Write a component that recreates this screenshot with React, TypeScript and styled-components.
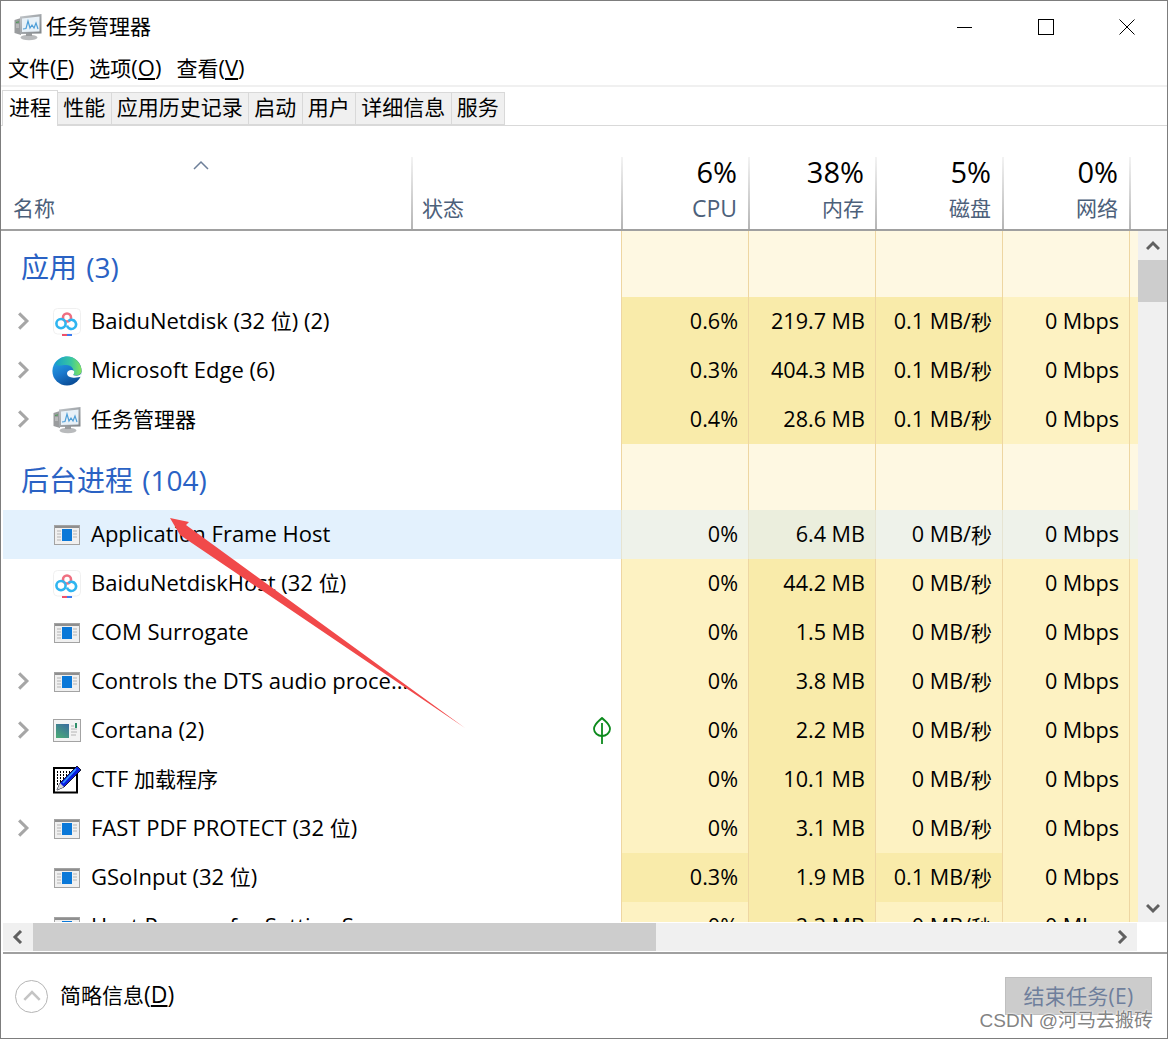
import React from "react";
import styled, { createGlobalStyle } from "styled-components";

const Global = createGlobalStyle`
  html, body { margin: 0; padding: 0; background: #fff; overflow: hidden; }
  * { box-sizing: border-box; }
`;

const FONT = `"Open Sans", "Noto Sans CJK SC", sans-serif`;
const COLS = "408px 210px 127px 127px 127px 127px 8px";

const Win = styled.div`
  position: relative;
  width: 1168px;
  height: 1039px;
  border: 1px solid #7d7d7d;
  display: flex;
  flex-direction: column;
  background: #fff;
  font-family: ${FONT};
  color: #000;
  overflow: hidden;
`;
const TitleBar = styled.div`
  height: 53px;
  flex: none;
  display: flex;
  align-items: center;
  padding: 0 0 2px 13px;
`;
const TitleText = styled.span`
  font-size: 21px;
  margin: 0 0 4px 4px;
  flex: 1;
`;
const WinButton = styled.div`
  width: 81px;
  height: 51px;
  display: flex;
  align-items: center;
  justify-content: center;
`;
const MenuBar = styled.div`
  height: 33px;
  flex: none;
  display: flex;
  gap: 15px;
  padding: 0 0 6px 7px;
  align-items: center;
  border-bottom: 2px solid #f0f0f0;
  font-size: 22px;
`;
const MenuItem = styled.span`
  u { text-underline-offset: 2px; }
`;
const CjkRun = styled.span`
  font-size: 21px;
`;
const TabBar = styled.div`
  height: 39px;
  flex: none;
  display: flex;
  align-items: flex-end;
  padding-left: 1px;
  border-bottom: 1px solid #d9d9d9;
`;
const Tab = styled.div<{ $active?: boolean }>`
  height: ${(p) => (p.$active ? 36 : 33)}px;
  margin-bottom: ${(p) => (p.$active ? -1 : 0)}px;
  padding: 0 ${(p) => (p.$active ? 6 : 5.25)}px 5px;
  display: flex;
  align-items: center;
  font-size: 21px;
  background: ${(p) => (p.$active ? "#fff" : "#f0f0f0")};
  border: 1px solid #d9d9d9;
  border-left: ${(p) => (p.$active ? "1px solid #d9d9d9" : "none")};
  border-bottom: ${(p) => (p.$active ? "none" : "1px solid #d9d9d9")};
  position: relative;
  z-index: ${(p) => (p.$active ? 1 : 0)};
`;
const HeaderGap = styled.div`
  height: 31px;
  flex: none;
`;
const HeaderRow = styled.div`
  height: 74px;
  flex: none;
  padding-left: 1px;
  display: grid;
  grid-template-columns: 409px 210px 127px 127px 127px 127px 8px;
  grid-template-rows: 72px;
  border-bottom: 2px solid #a0a0a0;
`;
const HeadCell = styled.div<{ $sep?: boolean; $metric?: boolean }>`
  position: relative;
  display: flex;
  flex-direction: column;
  justify-content: flex-end;
  align-items: ${(p) => (p.$metric ? "flex-end" : "flex-start")};
  padding: 0 ${(p) => (p.$metric ? 11 : 0)}px 7px ${(p) => (p.$metric ? 0 : p.$sep ? 9 : 11)}px;
  border-left: ${(p) => (p.$sep ? "2px solid transparent" : "none")};
  border-image: ${(p) => (p.$sep ? "linear-gradient(#f4f4f4,#b4b4b4) 1" : "none")};
`;
const Percent = styled.div`
  font-size: 29px;
  line-height: 30px;
  margin-bottom: 7px;
`;
const HeadLabel = styled.div`
  font-size: 21px;
  line-height: 28px;
  color: #4c607a;
`;
const LatinLabel = styled(HeadLabel)`
  font-size: 23px;
`;
const SortCaret = styled.svg`
  position: absolute;
  left: 191px;
  top: 3px;
`;
const Body = styled.div`
  height: 691px;
  flex: none;
  padding-left: 2px;
  display: flex;
`;
const Viewport = styled.div`
  flex: 1;
  overflow: hidden;
`;
const Row = styled.div`
  display: grid;
  grid-template-columns: ${COLS};
  height: 49px;
`;
const SectionRow = styled(Row)`
  height: 66px;
`;
const SectionTitle = styled.div`
  grid-column: 1 / span 2;
  font-size: 28px;
  word-spacing: 2px;
  color: #2a62c4;
  padding: 14px 0 0 18px;
  line-height: 44px;
`;
const NameCell = styled.div<{ $hot?: boolean }>`
  grid-column: 1;
  display: flex;
  align-items: center;
  font-size: 22px;
  white-space: nowrap;
  background: ${(p) => (p.$hot ? "#e3f1fd" : "#fff")};
`;
const NameText = styled.span`
  margin-bottom: 4px;
`;
const StatusCell = styled.div<{ $hot?: boolean }>`
  display: flex;
  align-items: center;
  justify-content: flex-end;
  padding-right: 10px;
  background: ${(p) => (p.$hot ? "#e3f1fd" : "#fff")};
`;
const ChevronSlot = styled.div`
  width: 49px;
  height: 18px;
  flex: none;
  padding-left: 11px;
  margin-bottom: 2px;
  display: flex;
`;
const IconSlot = styled.div`
  width: 30px;
  height: 30px;
  flex: none;
  margin-right: 9px;
  display: flex;
  align-items: center;
  justify-content: center;
`;
const tone: Record<string, string> = {
  section: "#fef8e2",
  low: "#fdf2c2",
  mid: "#f9ebaa",
  hotLow: "#eef2ea",
  hotMid: "#ebeedd",
};
const Metric = styled.div<{ $tone: string }>`
  display: flex;
  align-items: center;
  justify-content: flex-end;
  padding: 0 10px 2px 0;
  font-size: 21.6px;
  white-space: nowrap;
  background: ${(p) => tone[p.$tone]};
  border-left: 1px solid ${(p) => (p.$tone.startsWith("hot") ? "#e6e4d2" : "#eed6a2")};
`;
const VScroll = styled.div`
  width: 29px;
  flex: none;
  background: #f0f0f0;
  display: flex;
  flex-direction: column;
`;
const ScrollBtnV = styled.div<{ $end?: boolean }>`
  height: 29px;
  flex: none;
  display: flex;
  align-items: center;
  justify-content: center;
  margin-top: ${(p) => (p.$end ? "auto" : 0)};
`;
const VThumb = styled.div`
  height: 42px;
  background: #cdcdcd;
`;
const HScroll = styled.div`
  height: 28px;
  flex: none;
  margin: 1px 0 0 2px;
  display: flex;
`;
const HTrack = styled.div`
  width: 1134px;
  background: #f0f0f0;
  display: flex;
`;
const ScrollBtnH = styled.div`
  width: 30px;
  flex: none;
  display: flex;
  align-items: center;
  justify-content: center;
`;
const HThumb = styled.div`
  width: 623px;
  flex: none;
  background: #cdcdcd;
`;
const HSpace = styled.div`
  flex: 1;
`;
const Footer = styled.div`
  margin-top: 1px;
  height: 86px;
  flex: none;
  margin-left: 2px;
  border-top: 2px solid #a0a0a0;
  display: flex;
  align-items: center;
  padding: 0 15px 0 12px;
`;
const Collapse = styled.div`
  width: 33px;
  height: 33px;
  border-radius: 50%;
  border: 1px solid #b5b5b5;
  display: flex;
  align-items: center;
  justify-content: center;
  margin-right: 12px;
`;
const FooterText = styled.span`
  font-size: 23px;
  flex: 1;
  margin-bottom: 4px;
`;
const EndTask = styled.div`
  width: 147px;
  height: 38px;
  padding-bottom: 2px;
  background: #cccccc;
  border: 1px solid #bfbfbf;
  color: #6f7f9c;
  font-size: 21px;
  letter-spacing: 0.3px;
  display: flex;
  align-items: center;
  justify-content: center;
`;
const Watermark = styled.div`
  position: absolute;
  right: 14px;
  bottom: 5px;
  font-family: "Liberation Sans", "Noto Sans CJK SC", sans-serif;
  font-size: 19px;
  line-height: 24px;
  color: rgba(115, 115, 115, 0.9);
  text-shadow: 0 0 2px #fff, 0 0 2px #fff;
`;
const ArrowLayer = styled.svg`
  position: absolute;
  left: -1px;
  top: -1px;
  pointer-events: none;
`;

const Mixed = ({ t }: { t: string }) => (
  <>
    {t.split(/([\u4e00-\u9fff]+)/).map((part, i) =>
      i % 2 ? <CjkRun key={i}>{part}</CjkRun> : part
    )}
  </>
);

const Chevron = ({ dir, color = "#a6a6a6", size = 18, w = 2.4 }: { dir: "r" | "l" | "u" | "d"; color?: string; size?: number; w?: number }) => {
  const pts = { r: "4,1 10,7 4,13", l: "10,1 4,7 10,13", u: "1,10 7,4 13,10", d: "1,4 7,10 13,4" }[dir];
  return (
    <svg width={size} height={size} viewBox="0 0 14 14">
      <polyline points={pts} fill="none" stroke={color} strokeWidth={w} />
    </svg>
  );
};

let gradSeq = 0;
const TaskIcon = () => {
  const id = `tm${gradSeq++}`;
  return (
    <svg width="28" height="28" viewBox="0 0 28 28">
      <defs>
        <linearGradient id={id} x1="0" y1="0" x2="1" y2="1">
          <stop offset="0" stopColor="#c4c8cc" />
          <stop offset="1" stopColor="#7f8488" />
        </linearGradient>
      </defs>
      <path d="M0.5 7 L7 5 L7 22 L0.5 20 Z" fill="#9a9c9e" />
      <path d="M2 9 L5 8.2 V9.4 L2 10 Z" fill="#4f9a58" />
      <path d="M2 12h3M2 14h3" stroke="#d5d5d5" />
      <ellipse cx="15" cy="24.5" rx="8.5" ry="2.8" fill="#b8babc" />
      <rect x="12" y="20" width="6" height="3" fill="#9a9c9e" />
      <path d="M6 3.5 L27.5 1 L27.5 20.5 L6 21 Z" fill={`url(#${id})`} />
      <path d="M8 5.5 L25.5 3.5 L25.5 18.5 L8 19 Z" fill="#e8f1f8" />
      <polyline points="9,16 12,15.5 14,8 16,15 18,12 20,15 22,10 24,16" fill="none" stroke="#4f9fd8" strokeWidth="1.2" />
    </svg>
  );
};
const BaiduIcon = () => (
  <svg width="28" height="28" viewBox="0 0 28 28">
    <rect x="0.5" y="0.5" width="27" height="25.5" rx="4" fill="#fff" stroke="#f0f0f0" />
    <circle cx="14" cy="9.5" r="4" fill="none" stroke="#ef6f80" strokeWidth="2.6" />
    <circle cx="8" cy="15.6" r="4.6" fill="none" stroke="#2fb5f0" strokeWidth="2.6" />
    <path d="M14 17.5 A4.6 4.6 0 1 0 15.4 13" fill="none" stroke="#2fb5f0" strokeWidth="2.6" />
    <rect x="9" y="26" width="5" height="2" fill="#f0506a" />
    <rect x="14" y="26" width="5" height="2" fill="#3d7df0" />
  </svg>
);
const EdgeIcon = () => (
  <svg width="30" height="30" viewBox="0 0 30 30">
    <defs>
      <linearGradient id="eb" x1="0" y1="0" x2="0.5" y2="1">
        <stop offset="0" stopColor="#2ab0ec" />
        <stop offset="0.6" stopColor="#1a78cc" />
        <stop offset="1" stopColor="#0b4f9a" />
      </linearGradient>
      <linearGradient id="eg" x1="0" y1="0.5" x2="1" y2="0.5">
        <stop offset="0" stopColor="#16a0c8" />
        <stop offset="0.6" stopColor="#38c6a0" />
        <stop offset="1" stopColor="#86e45a" />
      </linearGradient>
    </defs>
    <circle cx="15" cy="15" r="14.6" fill="url(#eb)" />
    <path d="M3 7.5 C6.5 2.5 11 0.4 15 0.4 C24 0.4 29.6 8 29.6 15 C29.6 19 24.5 20.5 21 18.5 C23 14 20 9 14 9 C9.5 9 6 11 3 7.5 Z" fill="url(#eg)" />
    <path d="M15 17.5 C15 14 20 13 22 15 C22.5 16.5 22 18 21 19 C24 20.5 28 20 29.8 16.5 L29.4 20.5 C27 21.5 23 22 20 21.5 C17 21 15 20 15 17.5 Z" fill="#fbfdff" />
  </svg>
);
const AppIcon = () => (
  <svg width="26" height="20" viewBox="0 0 26 20">
    <rect x="0.5" y="0.5" width="25" height="19" fill="#f0f0f0" stroke="#a3a3a3" />
    <rect x="1" y="1" width="24" height="2" fill="#8f8f8f" />
    <rect x="8" y="4" width="10" height="12" fill="#0a78d8" />
    <path d="M3 6h4M3 9h4M3 12h4M3 15h4M19 6h4M19 9h4M19 12h4" stroke="#b4b4b4" strokeWidth="1" />
  </svg>
);
const CortanaIcon = () => (
  <svg width="28" height="24" viewBox="0 0 28 24">
    <defs>
      <linearGradient id="cg" x1="0.8" y1="0" x2="0.2" y2="1">
        <stop offset="0" stopColor="#3a6f9c" />
        <stop offset="1" stopColor="#4aa878" />
      </linearGradient>
    </defs>
    <rect x="0.5" y="0.5" width="27" height="22" fill="#f3f3f3" stroke="#a3a3a3" />
    <rect x="3" y="5" width="13" height="14" fill="url(#cg)" />
    <rect x="22" y="4" width="2" height="5" fill="#2f8f6a" />
    <path d="M18 7h3M18 10h6M18 13h6M18 16h5" stroke="#b4b4b4" strokeWidth="1" />
  </svg>
);
const PenIcon = () => (
  <svg width="28" height="28" viewBox="0 0 28 28">
    <rect x="1" y="2" width="23" height="24.5" fill="#fff" stroke="#000" strokeWidth="2" />
    <path d="M4 6h1M7 6h1M10 6h1M13 6h1M16 6h1M4 9h1M7 9h1M10 9h1M13 9h1M4 12h1M7 12h1M10 12h1M4 15h1M7 15h1M4 18h1" stroke="#000" strokeWidth="2" />
    <path d="M24 0 L28 4 L11 21 L4 24 L7 17 Z" fill="#0a1ee0" stroke="#000" strokeWidth="0.8" />
    <path d="M23 3 L10 17" stroke="#3aa0ff" strokeWidth="1.6" />
    <path d="M4 24 L7 17 L11 21 Z" fill="#d8d8d8" />
  </svg>
);
const LeafIcon = () => (
  <svg width="18" height="28" viewBox="0 0 18 28">
    <path d="M9 1 C13 5 17 7 17 12 C17 16 13 19 9 19 C5 19 1 16 1 12 C1 7 5 5 9 1 Z" fill="none" stroke="#0c8a1c" strokeWidth="1.8" />
    <path d="M9 6 V27" stroke="#0c8a1c" strokeWidth="1.8" />
  </svg>
);

type R = {
  icon: React.ReactNode;
  name: string;
  exp?: boolean;
  cpu: string;
  mem: string;
  disk: string;
  cpuHi?: boolean;
  diskHi?: boolean;
  hot?: boolean;
  leaf?: boolean;
};

const apps: R[] = [
  { icon: <BaiduIcon />, name: "BaiduNetdisk (32 位) (2)", exp: true, cpu: "0.6%", mem: "219.7 MB", disk: "0.1 MB/秒", cpuHi: true, diskHi: true },
  { icon: <EdgeIcon />, name: "Microsoft Edge (6)", exp: true, cpu: "0.3%", mem: "404.3 MB", disk: "0.1 MB/秒", cpuHi: true, diskHi: true },
  { icon: <TaskIcon />, name: "任务管理器", exp: true, cpu: "0.4%", mem: "28.6 MB", disk: "0.1 MB/秒", cpuHi: true, diskHi: true },
];
const bg: R[] = [
  { icon: <AppIcon />, name: "Application Frame Host", cpu: "0%", mem: "6.4 MB", disk: "0 MB/秒", hot: true },
  { icon: <BaiduIcon />, name: "BaiduNetdiskHost (32 位)", cpu: "0%", mem: "44.2 MB", disk: "0 MB/秒" },
  { icon: <AppIcon />, name: "COM Surrogate", cpu: "0%", mem: "1.5 MB", disk: "0 MB/秒" },
  { icon: <AppIcon />, name: "Controls the DTS audio proce...", exp: true, cpu: "0%", mem: "3.8 MB", disk: "0 MB/秒" },
  { icon: <CortanaIcon />, name: "Cortana (2)", exp: true, cpu: "0%", mem: "2.2 MB", disk: "0 MB/秒", leaf: true },
  { icon: <PenIcon />, name: "CTF 加载程序", cpu: "0%", mem: "10.1 MB", disk: "0 MB/秒" },
  { icon: <AppIcon />, name: "FAST PDF PROTECT (32 位)", exp: true, cpu: "0%", mem: "3.1 MB", disk: "0 MB/秒" },
  { icon: <AppIcon />, name: "GSoInput (32 位)", cpu: "0.3%", mem: "1.9 MB", disk: "0.1 MB/秒", cpuHi: true, diskHi: true },
  { icon: <AppIcon />, name: "Host Process for Setting S", cpu: "0%", mem: "2.3 MB", disk: "0 MB/秒" },
];

const ProcessRow = ({ r }: { r: R }) => {
  const low = r.hot ? "hotLow" : "low";
  const mid = r.hot ? "hotMid" : "mid";
  return (
    <Row>
      <NameCell $hot={r.hot}>
        <ChevronSlot>{r.exp && <Chevron dir="r" />}</ChevronSlot>
        <IconSlot>{r.icon}</IconSlot>
        <NameText><Mixed t={r.name} /></NameText>
      </NameCell>
      <StatusCell $hot={r.hot}>{r.leaf && <LeafIcon />}</StatusCell>
      <Metric $tone={r.cpuHi ? mid : low}>{r.cpu}</Metric>
      <Metric $tone={mid}>{r.mem}</Metric>
      <Metric $tone={r.diskHi ? mid : low}><Mixed t={r.disk} /></Metric>
      <Metric $tone={low}>0 Mbps</Metric>
      <Metric $tone={low} />
    </Row>
  );
};

const Section = ({ title }: { title: string }) => (
  <SectionRow>
    <SectionTitle>{title}</SectionTitle>
    <Metric $tone="section" />
    <Metric $tone="section" />
    <Metric $tone="section" />
    <Metric $tone="section" />
    <Metric $tone="section" />
  </SectionRow>
);

export default function App() {
  return (
    <Win>
      <Global />
      <TitleBar>
        <TaskIcon />
        <TitleText>任务管理器</TitleText>
        <WinButton>
          <svg width="16" height="16" viewBox="0 0 16 16"><path d="M0 8.5H15" stroke="#000" /></svg>
        </WinButton>
        <WinButton>
          <svg width="16" height="16" viewBox="0 0 16 16"><rect x="0.5" y="0.5" width="15" height="15" fill="none" stroke="#000" /></svg>
        </WinButton>
        <WinButton>
          <svg width="16" height="16" viewBox="0 0 16 16"><path d="M0.5 0.5L15.5 15.5M15.5 0.5L0.5 15.5" stroke="#000" /></svg>
        </WinButton>
      </TitleBar>
      <MenuBar>
        <MenuItem><CjkRun>文件</CjkRun>(<u>F</u>)</MenuItem>
        <MenuItem><CjkRun>选项</CjkRun>(<u>O</u>)</MenuItem>
        <MenuItem><CjkRun>查看</CjkRun>(<u>V</u>)</MenuItem>
      </MenuBar>
      <TabBar>
        <Tab $active>进程</Tab>
        <Tab>性能</Tab>
        <Tab>应用历史记录</Tab>
        <Tab>启动</Tab>
        <Tab>用户</Tab>
        <Tab>详细信息</Tab>
        <Tab>服务</Tab>
      </TabBar>
      <HeaderGap />
      <HeaderRow>
        <HeadCell>
          <SortCaret width="16" height="10" viewBox="0 0 16 10">
            <polyline points="1,9 8,2 15,9" fill="none" stroke="#6d7f99" strokeWidth="1.5" />
          </SortCaret>
          <HeadLabel>名称</HeadLabel>
        </HeadCell>
        <HeadCell $sep><HeadLabel>状态</HeadLabel></HeadCell>
        <HeadCell $sep $metric><Percent>6%</Percent><LatinLabel>CPU</LatinLabel></HeadCell>
        <HeadCell $sep $metric><Percent>38%</Percent><HeadLabel>内存</HeadLabel></HeadCell>
        <HeadCell $sep $metric><Percent>5%</Percent><HeadLabel>磁盘</HeadLabel></HeadCell>
        <HeadCell $sep $metric><Percent>0%</Percent><HeadLabel>网络</HeadLabel></HeadCell>
        <HeadCell $sep />
      </HeaderRow>
      <Body>
        <Viewport>
          <Section title="应用 (3)" />
          {apps.map((r) => <ProcessRow key={r.name} r={r} />)}
          <Section title="后台进程 (104)" />
          {bg.map((r) => <ProcessRow key={r.name} r={r} />)}
        </Viewport>
        <VScroll>
          <ScrollBtnV><Chevron dir="u" color="#606060" size={14} w={3} /></ScrollBtnV>
          <VThumb />
          <ScrollBtnV $end><Chevron dir="d" color="#606060" size={14} w={3} /></ScrollBtnV>
        </VScroll>
      </Body>
      <HScroll>
        <HTrack>
          <ScrollBtnH><Chevron dir="l" color="#606060" size={14} w={3} /></ScrollBtnH>
          <HThumb />
          <HSpace />
          <ScrollBtnH><Chevron dir="r" color="#606060" size={14} w={3} /></ScrollBtnH>
        </HTrack>
      </HScroll>
      <Footer>
        <Collapse><Chevron dir="u" color="#c4c4c4" size={18} w={2} /></Collapse>
        <FooterText><CjkRun>简略信息</CjkRun>(<u>D</u>)</FooterText>
        <EndTask>结束任务(E)</EndTask>
      </Footer>
      <Watermark>CSDN @河马去搬砖</Watermark>
      <ArrowLayer width="1168" height="1039" viewBox="0 0 1168 1039">
        <polygon points="170,518 189,522 186,525 465,728 180,535" fill="#f1494a" />
      </ArrowLayer>
    </Win>
  );
}
